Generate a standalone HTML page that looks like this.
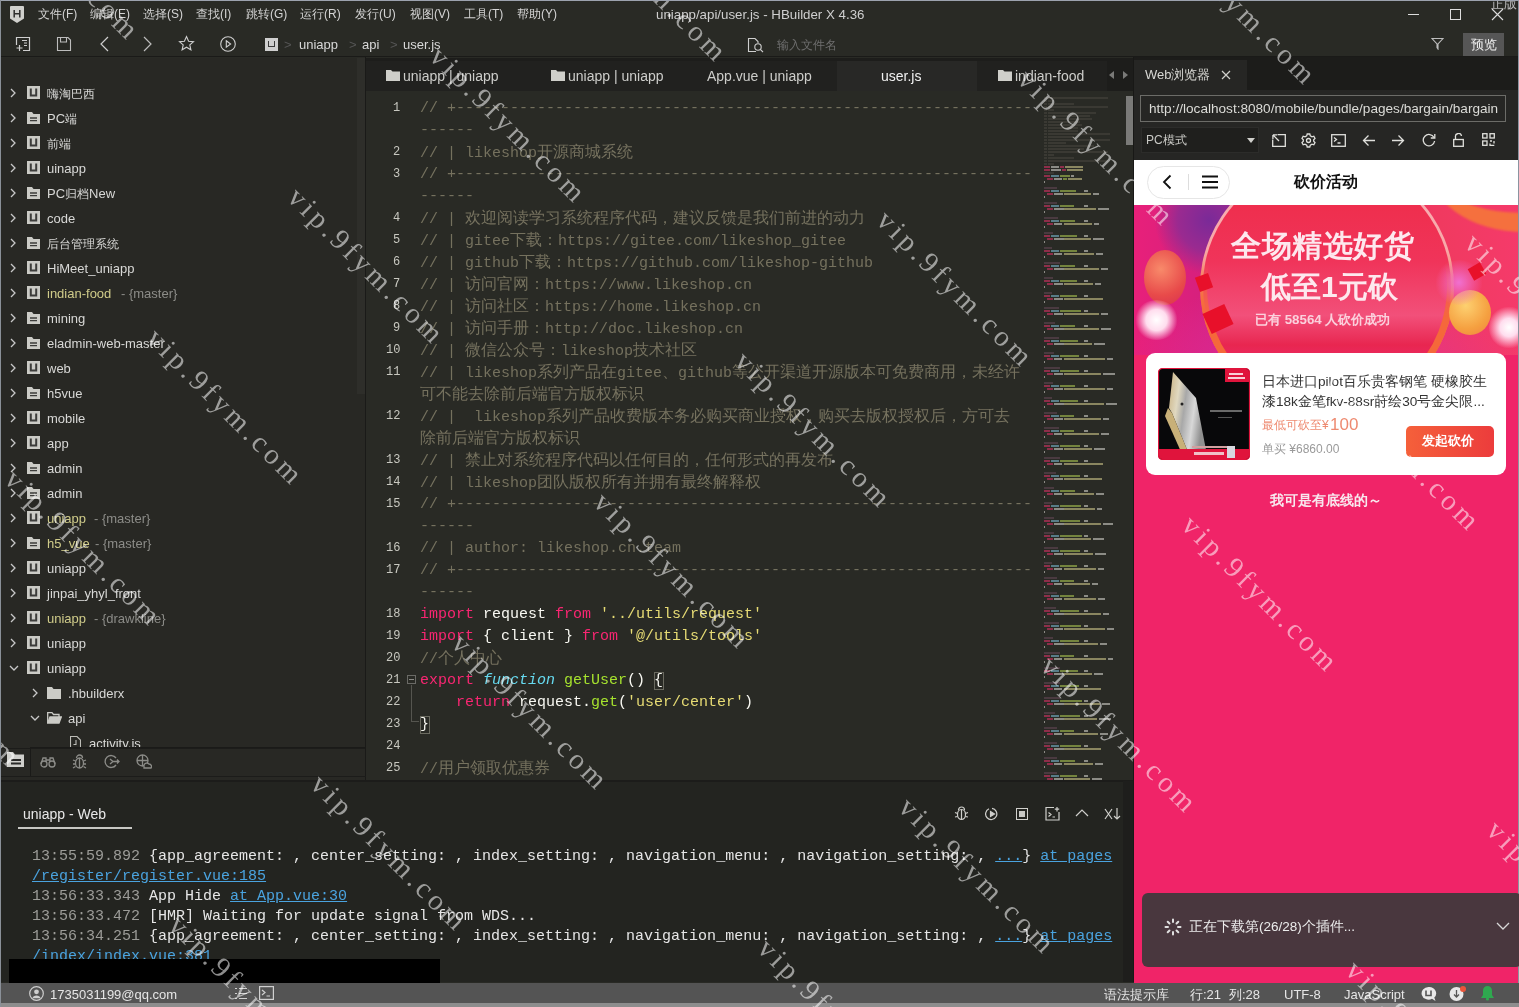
<!DOCTYPE html>
<html><head><meta charset="utf-8">
<style>
*{box-sizing:border-box;margin:0;padding:0}
html,body{width:1519px;height:1007px;overflow:hidden;background:#292a25;font-family:"Liberation Sans",sans-serif;color:#d6d6d6}
.a{position:absolute}
.t{position:absolute;white-space:pre;line-height:1}
#menu{left:0;top:0;width:1519px;height:28px;background:#292a25}
.m{position:absolute;top:8px;font-size:12px;line-height:1;white-space:pre;color:#d4d4d4}
#tool{left:0;top:28px;width:1519px;height:30px;background:#292a25}
#side{left:0;top:58px;width:366px;height:722px;background:#282824}
#tabs{left:366px;top:58px;width:769px;height:33px;background:#1d1d1b}
#editor{left:366px;top:91px;width:769px;height:689px;background:#292a25}
#console{left:0;top:780px;width:1135px;height:202px;background:#232420}
#status{left:0;top:983px;width:1519px;height:20px;background:#545454}
#browser{left:1135px;top:58px;width:384px;height:924px;background:#252524}
.st{font-size:13px}
.tb{font-size:14px;color:#cdcdca}
.ln{font-family:"Liberation Mono",monospace;font-size:12px;color:#c8c8c0}
.row{position:absolute;left:420px;white-space:pre;height:22px;line-height:22px}
.cj{font-size:16px}
.cl{position:absolute;white-space:pre;font-family:"Liberation Mono",monospace;font-size:15px;line-height:20px;height:20px;color:#e6e6e6}
.lk{color:#4aa3df;text-decoration:underline}
.sb{font-size:13px;color:#e6e6e6}
.wm{position:absolute;white-space:pre;font-family:"Liberation Serif",serif;font-size:29px;line-height:1;letter-spacing:3.9px;color:#8c8c8c;mix-blend-mode:screen;transform:rotate(45deg);transform-origin:0 0;pointer-events:none}
#mm i{position:absolute;display:block}
.code{font-family:"Liberation Mono",monospace;font-size:15px}
</style></head>
<body>
<div id="menu" class="a"></div>
<svg class="a" style="left:10px;top:6px" width="14" height="17" viewBox="0 0 14 17"><path d="M0 1Q0 0 1 0H13Q14 0 14 1V12.5L7 17L0 12.5Z" fill="#d0d0cc"/><path d="M4.2 4V11.5M9.8 4V11.5M4.2 7.7H9.8" stroke="#2e2e2c" stroke-width="1.5" fill="none"/></svg>
<span class="m" style="left:38px">文件(F)</span>
<span class="m" style="left:90px">编辑(E)</span>
<span class="m" style="left:143px">选择(S)</span>
<span class="m" style="left:196px">查找(I)</span>
<span class="m" style="left:246px">跳转(G)</span>
<span class="m" style="left:300px">运行(R)</span>
<span class="m" style="left:355px">发行(U)</span>
<span class="m" style="left:410px">视图(V)</span>
<span class="m" style="left:464px">工具(T)</span>
<span class="m" style="left:517px">帮助(Y)</span>
<span class="m" style="left:656px;top:8px;font-size:13.3px;color:#cfcfcf">uniapp/api/user.js - HBuilder X 4.36</span>
<div class="a" style="left:1408px;top:14px;width:11px;height:1px;background:#ddd"></div>
<div class="a" style="left:1450px;top:9px;width:11px;height:11px;border:1px solid #ddd"></div>
<svg class="a" style="left:1491px;top:8px" width="13" height="13" viewBox="0 0 13 13"><path d="M1 1L12 12M12 1L1 12" stroke="#ddd" stroke-width="1.1"/></svg>
<div id="tool" class="a"></div>
<svg class="a" style="left:15px;top:36px" width="16" height="16" viewBox="0 0 16 16" fill="none" stroke="#cfcfcf" stroke-width="1.2"><path d="M5 1.5H14.5V14.5H8M1.5 9V1.5H5"/><path d="M7 4.5H12M9 7H12M9 9.5H12M4.5 9V15M1.5 12H7.5"/></svg>
<svg class="a" style="left:56px;top:36px" width="16" height="16" viewBox="0 0 16 16" fill="none" stroke="#bdbdbd" stroke-width="1.1"><path d="M1.5 1.5H12L14.5 4V14.5H1.5Z"/><path d="M4.5 1.5V6H10.5V1.5"/></svg>
<svg class="a" style="left:99px;top:36px" width="12" height="16" viewBox="0 0 12 16" fill="none" stroke="#cfcfcf" stroke-width="1.2"><path d="M9 1L2 8L9 15"/></svg>
<svg class="a" style="left:141px;top:36px" width="12" height="16" viewBox="0 0 12 16" fill="none" stroke="#bdbdbd" stroke-width="1.2"><path d="M3 1L10 8L3 15"/></svg>
<svg class="a" style="left:178px;top:35px" width="17" height="17" viewBox="0 0 17 17" fill="none" stroke="#cfcfcf" stroke-width="1.1"><path d="M8.5 1.5L10.6 6.2L15.5 6.6L11.8 9.9L12.9 14.8L8.5 12.2L4.1 14.8L5.2 9.9L1.5 6.6L6.4 6.2Z"/></svg>
<svg class="a" style="left:219px;top:35px" width="18" height="18" viewBox="0 0 18 18" fill="none" stroke="#cfcfcf" stroke-width="1.1"><circle cx="9" cy="9" r="7.3"/><path d="M7.3 5.8L11.6 9L7.3 12.2Z"/></svg>
<div class="a" style="left:265px;top:38px;width:13px;height:13px;background:#cfcfcf"></div>
<div class="a" style="left:268px;top:41px;width:7px;height:6px;border:1.5px solid #3a3a3a;border-top:none"></div>
<span class="t" style="left:284px;top:38px;font-size:13px;color:#555">&gt;</span>
<span class="t" style="left:299px;top:38px;font-size:13px;color:#d8d8d8">uniapp</span>
<span class="t" style="left:349px;top:38px;font-size:13px;color:#555">&gt;</span>
<span class="t" style="left:362px;top:38px;font-size:13px;color:#d8d8d8">api</span>
<span class="t" style="left:390px;top:38px;font-size:13px;color:#555">&gt;</span>
<span class="t" style="left:403px;top:38px;font-size:13px;color:#d8d8d8">user.js</span>
<svg class="a" style="left:747px;top:37px" width="17" height="16" viewBox="0 0 17 16" fill="none" stroke="#cfcfcf" stroke-width="1.1"><path d="M9 14.5H1.5V1.5H8L11 4.5V6"/><circle cx="11" cy="10" r="3.2"/><path d="M13.3 12.3L16 15"/></svg>
<span class="t" style="left:777px;top:39px;font-size:12px;color:#6e6e6e">输入文件名</span>
<svg class="a" style="left:1431px;top:37px" width="13" height="13" viewBox="0 0 13 13" fill="none" stroke="#bdbdbd" stroke-width="1.1"><path d="M1 1.5H12L7 7V12L6 10.5V7Z"/></svg>
<div class="a" style="left:1463px;top:33px;width:41px;height:23px;background:#565656"></div>
<span class="t" style="left:1471px;top:38px;font-size:13px;color:#eee">预览</span>
<div id="side" class="a"></div>
<svg class="a" style="left:9px;top:88px" width="8" height="10" viewBox="0 0 8 10" fill="none" stroke="#c8c8c8" stroke-width="1.3"><path d="M2 1L6 5L2 9"/></svg>
<svg class="a" style="left:27px;top:86px" width="13" height="13" viewBox="0 0 13 13"><rect width="13" height="13" fill="#cbcbc6"/><path d="M3.8 2.5V9.5H9.2V2.5" fill="none" stroke="#3c3c3a" stroke-width="2"/></svg>
<span class="t st" style="left:47px;top:87px;color:#d8d8d6"><span style="font-size:12px">嗨淘巴西</span></span>
<svg class="a" style="left:9px;top:113px" width="8" height="10" viewBox="0 0 8 10" fill="none" stroke="#c8c8c8" stroke-width="1.3"><path d="M2 1L6 5L2 9"/></svg>
<svg class="a" style="left:27px;top:112px" width="13" height="12" viewBox="0 0 13 12"><path d="M0 0H5L6.5 2H13V12H0Z" fill="#cbcbc6"/><path d="M3 6H10M3 8.7H10" stroke="#3c3c3a" stroke-width="1.3"/></svg>
<span class="t st" style="left:47px;top:112px;color:#d8d8d6">PC<span style="font-size:12px">端</span></span>
<svg class="a" style="left:9px;top:138px" width="8" height="10" viewBox="0 0 8 10" fill="none" stroke="#c8c8c8" stroke-width="1.3"><path d="M2 1L6 5L2 9"/></svg>
<svg class="a" style="left:27px;top:136px" width="13" height="13" viewBox="0 0 13 13"><rect width="13" height="13" fill="#cbcbc6"/><path d="M3.8 2.5V9.5H9.2V2.5" fill="none" stroke="#3c3c3a" stroke-width="2"/></svg>
<span class="t st" style="left:47px;top:137px;color:#d8d8d6"><span style="font-size:12px">前端</span></span>
<svg class="a" style="left:9px;top:163px" width="8" height="10" viewBox="0 0 8 10" fill="none" stroke="#c8c8c8" stroke-width="1.3"><path d="M2 1L6 5L2 9"/></svg>
<svg class="a" style="left:27px;top:161px" width="13" height="13" viewBox="0 0 13 13"><rect width="13" height="13" fill="#cbcbc6"/><path d="M3.8 2.5V9.5H9.2V2.5" fill="none" stroke="#3c3c3a" stroke-width="2"/></svg>
<span class="t st" style="left:47px;top:162px;color:#d8d8d6">uinapp</span>
<svg class="a" style="left:9px;top:188px" width="8" height="10" viewBox="0 0 8 10" fill="none" stroke="#c8c8c8" stroke-width="1.3"><path d="M2 1L6 5L2 9"/></svg>
<svg class="a" style="left:27px;top:187px" width="13" height="12" viewBox="0 0 13 12"><path d="M0 0H5L6.5 2H13V12H0Z" fill="#cbcbc6"/><path d="M3 6H10M3 8.7H10" stroke="#3c3c3a" stroke-width="1.3"/></svg>
<span class="t st" style="left:47px;top:187px;color:#d8d8d6">PC<span style="font-size:12px">归档</span>New</span>
<svg class="a" style="left:9px;top:213px" width="8" height="10" viewBox="0 0 8 10" fill="none" stroke="#c8c8c8" stroke-width="1.3"><path d="M2 1L6 5L2 9"/></svg>
<svg class="a" style="left:27px;top:211px" width="13" height="13" viewBox="0 0 13 13"><rect width="13" height="13" fill="#cbcbc6"/><path d="M3.8 2.5V9.5H9.2V2.5" fill="none" stroke="#3c3c3a" stroke-width="2"/></svg>
<span class="t st" style="left:47px;top:212px;color:#d8d8d6">code</span>
<svg class="a" style="left:9px;top:238px" width="8" height="10" viewBox="0 0 8 10" fill="none" stroke="#c8c8c8" stroke-width="1.3"><path d="M2 1L6 5L2 9"/></svg>
<svg class="a" style="left:27px;top:237px" width="13" height="12" viewBox="0 0 13 12"><path d="M0 0H5L6.5 2H13V12H0Z" fill="#cbcbc6"/><path d="M3 6H10M3 8.7H10" stroke="#3c3c3a" stroke-width="1.3"/></svg>
<span class="t st" style="left:47px;top:237px;color:#d8d8d6"><span style="font-size:12px">后台管理系统</span></span>
<svg class="a" style="left:9px;top:263px" width="8" height="10" viewBox="0 0 8 10" fill="none" stroke="#c8c8c8" stroke-width="1.3"><path d="M2 1L6 5L2 9"/></svg>
<svg class="a" style="left:27px;top:261px" width="13" height="13" viewBox="0 0 13 13"><rect width="13" height="13" fill="#cbcbc6"/><path d="M3.8 2.5V9.5H9.2V2.5" fill="none" stroke="#3c3c3a" stroke-width="2"/></svg>
<span class="t st" style="left:47px;top:262px;color:#d8d8d6">HiMeet_uniapp</span>
<svg class="a" style="left:9px;top:288px" width="8" height="10" viewBox="0 0 8 10" fill="none" stroke="#c8c8c8" stroke-width="1.3"><path d="M2 1L6 5L2 9"/></svg>
<svg class="a" style="left:27px;top:286px" width="13" height="13" viewBox="0 0 13 13"><rect width="13" height="13" fill="#cbcbc6"/><path d="M3.8 2.5V9.5H9.2V2.5" fill="none" stroke="#3c3c3a" stroke-width="2"/></svg>
<span class="t st" style="left:47px;top:287px;color:#d0cc8a">indian-food</span>
<span class="t st" style="left:121px;top:287px;color:#8c8c88">- {master}</span>
<svg class="a" style="left:9px;top:313px" width="8" height="10" viewBox="0 0 8 10" fill="none" stroke="#c8c8c8" stroke-width="1.3"><path d="M2 1L6 5L2 9"/></svg>
<svg class="a" style="left:27px;top:312px" width="13" height="12" viewBox="0 0 13 12"><path d="M0 0H5L6.5 2H13V12H0Z" fill="#cbcbc6"/><path d="M3 6H10M3 8.7H10" stroke="#3c3c3a" stroke-width="1.3"/></svg>
<span class="t st" style="left:47px;top:312px;color:#d8d8d6">mining</span>
<svg class="a" style="left:9px;top:338px" width="8" height="10" viewBox="0 0 8 10" fill="none" stroke="#c8c8c8" stroke-width="1.3"><path d="M2 1L6 5L2 9"/></svg>
<svg class="a" style="left:27px;top:337px" width="13" height="12" viewBox="0 0 13 12"><path d="M0 0H5L6.5 2H13V12H0Z" fill="#cbcbc6"/><path d="M3 6H10M3 8.7H10" stroke="#3c3c3a" stroke-width="1.3"/></svg>
<span class="t st" style="left:47px;top:337px;color:#d8d8d6">eladmin-web-master</span>
<svg class="a" style="left:9px;top:363px" width="8" height="10" viewBox="0 0 8 10" fill="none" stroke="#c8c8c8" stroke-width="1.3"><path d="M2 1L6 5L2 9"/></svg>
<svg class="a" style="left:27px;top:361px" width="13" height="13" viewBox="0 0 13 13"><rect width="13" height="13" fill="#cbcbc6"/><path d="M3.8 2.5V9.5H9.2V2.5" fill="none" stroke="#3c3c3a" stroke-width="2"/></svg>
<span class="t st" style="left:47px;top:362px;color:#d8d8d6">web</span>
<svg class="a" style="left:9px;top:388px" width="8" height="10" viewBox="0 0 8 10" fill="none" stroke="#c8c8c8" stroke-width="1.3"><path d="M2 1L6 5L2 9"/></svg>
<svg class="a" style="left:27px;top:387px" width="13" height="12" viewBox="0 0 13 12"><path d="M0 0H5L6.5 2H13V12H0Z" fill="#cbcbc6"/><path d="M3 6H10M3 8.7H10" stroke="#3c3c3a" stroke-width="1.3"/></svg>
<span class="t st" style="left:47px;top:387px;color:#d8d8d6">h5vue</span>
<svg class="a" style="left:9px;top:413px" width="8" height="10" viewBox="0 0 8 10" fill="none" stroke="#c8c8c8" stroke-width="1.3"><path d="M2 1L6 5L2 9"/></svg>
<svg class="a" style="left:27px;top:411px" width="13" height="13" viewBox="0 0 13 13"><rect width="13" height="13" fill="#cbcbc6"/><path d="M3.8 2.5V9.5H9.2V2.5" fill="none" stroke="#3c3c3a" stroke-width="2"/></svg>
<span class="t st" style="left:47px;top:412px;color:#d8d8d6">mobile</span>
<svg class="a" style="left:9px;top:438px" width="8" height="10" viewBox="0 0 8 10" fill="none" stroke="#c8c8c8" stroke-width="1.3"><path d="M2 1L6 5L2 9"/></svg>
<svg class="a" style="left:27px;top:436px" width="13" height="13" viewBox="0 0 13 13"><rect width="13" height="13" fill="#cbcbc6"/><path d="M3.8 2.5V9.5H9.2V2.5" fill="none" stroke="#3c3c3a" stroke-width="2"/></svg>
<span class="t st" style="left:47px;top:437px;color:#d8d8d6">app</span>
<svg class="a" style="left:9px;top:463px" width="8" height="10" viewBox="0 0 8 10" fill="none" stroke="#c8c8c8" stroke-width="1.3"><path d="M2 1L6 5L2 9"/></svg>
<svg class="a" style="left:27px;top:462px" width="13" height="12" viewBox="0 0 13 12"><path d="M0 0H5L6.5 2H13V12H0Z" fill="#cbcbc6"/><path d="M3 6H10M3 8.7H10" stroke="#3c3c3a" stroke-width="1.3"/></svg>
<span class="t st" style="left:47px;top:462px;color:#d8d8d6">admin</span>
<svg class="a" style="left:9px;top:488px" width="8" height="10" viewBox="0 0 8 10" fill="none" stroke="#c8c8c8" stroke-width="1.3"><path d="M2 1L6 5L2 9"/></svg>
<svg class="a" style="left:27px;top:487px" width="13" height="12" viewBox="0 0 13 12"><path d="M0 0H5L6.5 2H13V12H0Z" fill="#cbcbc6"/><path d="M3 6H10M3 8.7H10" stroke="#3c3c3a" stroke-width="1.3"/></svg>
<span class="t st" style="left:47px;top:487px;color:#d8d8d6">admin</span>
<svg class="a" style="left:9px;top:513px" width="8" height="10" viewBox="0 0 8 10" fill="none" stroke="#c8c8c8" stroke-width="1.3"><path d="M2 1L6 5L2 9"/></svg>
<svg class="a" style="left:27px;top:511px" width="13" height="13" viewBox="0 0 13 13"><rect width="13" height="13" fill="#cbcbc6"/><path d="M3.8 2.5V9.5H9.2V2.5" fill="none" stroke="#3c3c3a" stroke-width="2"/></svg>
<span class="t st" style="left:47px;top:512px;color:#d0cc8a">uniapp</span>
<span class="t st" style="left:94px;top:512px;color:#8c8c88">- {master}</span>
<svg class="a" style="left:9px;top:538px" width="8" height="10" viewBox="0 0 8 10" fill="none" stroke="#c8c8c8" stroke-width="1.3"><path d="M2 1L6 5L2 9"/></svg>
<svg class="a" style="left:27px;top:537px" width="13" height="12" viewBox="0 0 13 12"><path d="M0 0H5L6.5 2H13V12H0Z" fill="#cbcbc6"/><path d="M3 6H10M3 8.7H10" stroke="#3c3c3a" stroke-width="1.3"/></svg>
<span class="t st" style="left:47px;top:537px;color:#d0cc8a">h5_vue</span>
<span class="t st" style="left:95px;top:537px;color:#8c8c88">- {master}</span>
<svg class="a" style="left:9px;top:563px" width="8" height="10" viewBox="0 0 8 10" fill="none" stroke="#c8c8c8" stroke-width="1.3"><path d="M2 1L6 5L2 9"/></svg>
<svg class="a" style="left:27px;top:561px" width="13" height="13" viewBox="0 0 13 13"><rect width="13" height="13" fill="#cbcbc6"/><path d="M3.8 2.5V9.5H9.2V2.5" fill="none" stroke="#3c3c3a" stroke-width="2"/></svg>
<span class="t st" style="left:47px;top:562px;color:#d8d8d6">uniapp</span>
<svg class="a" style="left:9px;top:588px" width="8" height="10" viewBox="0 0 8 10" fill="none" stroke="#c8c8c8" stroke-width="1.3"><path d="M2 1L6 5L2 9"/></svg>
<svg class="a" style="left:27px;top:586px" width="13" height="13" viewBox="0 0 13 13"><rect width="13" height="13" fill="#cbcbc6"/><path d="M3.8 2.5V9.5H9.2V2.5" fill="none" stroke="#3c3c3a" stroke-width="2"/></svg>
<span class="t st" style="left:47px;top:587px;color:#d8d8d6">jinpai_yhyl_front</span>
<svg class="a" style="left:9px;top:613px" width="8" height="10" viewBox="0 0 8 10" fill="none" stroke="#c8c8c8" stroke-width="1.3"><path d="M2 1L6 5L2 9"/></svg>
<svg class="a" style="left:27px;top:611px" width="13" height="13" viewBox="0 0 13 13"><rect width="13" height="13" fill="#cbcbc6"/><path d="M3.8 2.5V9.5H9.2V2.5" fill="none" stroke="#3c3c3a" stroke-width="2"/></svg>
<span class="t st" style="left:47px;top:612px;color:#d0cc8a">uniapp</span>
<span class="t st" style="left:94px;top:612px;color:#8c8c88">- {drawkline}</span>
<svg class="a" style="left:9px;top:638px" width="8" height="10" viewBox="0 0 8 10" fill="none" stroke="#c8c8c8" stroke-width="1.3"><path d="M2 1L6 5L2 9"/></svg>
<svg class="a" style="left:27px;top:636px" width="13" height="13" viewBox="0 0 13 13"><rect width="13" height="13" fill="#cbcbc6"/><path d="M3.8 2.5V9.5H9.2V2.5" fill="none" stroke="#3c3c3a" stroke-width="2"/></svg>
<span class="t st" style="left:47px;top:637px;color:#d8d8d6">uniapp</span>
<svg class="a" style="left:9px;top:664px" width="10" height="8" viewBox="0 0 10 8" fill="none" stroke="#c8c8c8" stroke-width="1.3"><path d="M1 2L5 6L9 2"/></svg>
<svg class="a" style="left:27px;top:661px" width="13" height="13" viewBox="0 0 13 13"><rect width="13" height="13" fill="#cbcbc6"/><path d="M3.8 2.5V9.5H9.2V2.5" fill="none" stroke="#3c3c3a" stroke-width="2"/></svg>
<span class="t st" style="left:47px;top:662px;color:#d8d8d6">uniapp</span>
<svg class="a" style="left:31px;top:688px" width="8" height="10" viewBox="0 0 8 10" fill="none" stroke="#c8c8c8" stroke-width="1.3"><path d="M2 1L6 5L2 9"/></svg>
<svg class="a" style="left:47px;top:687px" width="14" height="12" viewBox="0 0 14 12"><path d="M0 0H5L6.5 2H14V12H0Z" fill="#cbcbc6"/></svg>
<span class="t st" style="left:68px;top:687px;color:#d8d8d6">.hbuilderx</span>
<svg class="a" style="left:30px;top:714px" width="10" height="8" viewBox="0 0 10 8" fill="none" stroke="#c8c8c8" stroke-width="1.3"><path d="M1 2L5 6L9 2"/></svg>
<svg class="a" style="left:47px;top:712px" width="15" height="12" viewBox="0 0 15 12" fill="none" stroke="#cbcbc6" stroke-width="1.3"><path d="M0.7 11V0.7H5L6.5 2.5H12V5"/><path d="M0.7 11L3 5H14.3L12 11Z" fill="#cbcbc6"/></svg>
<span class="t st" style="left:68px;top:712px;color:#d8d8d6">api</span>
<svg class="a" style="left:70px;top:736px" width="11" height="13" viewBox="0 0 11 13" fill="none" stroke="#bdbdb8" stroke-width="1.1"><path d="M0.5 0.5H7L10.5 4V12.5H0.5Z"/><path d="M6 4V8.5H3.5"/></svg>
<span class="t st" style="left:89px;top:737px;color:#d8d8d6">activity.js</span>
<div class="a" style="left:357px;top:58px;width:8px;height:336px;background:#2e2e2a"></div>
<div class="a" style="left:0;top:56px;width:1519px;height:1px;background:#1a1a18"></div>
<div class="a" style="left:0;top:748px;width:366px;height:32px;background:#282824;border-top:1px solid #1c1c1a"></div>
<div id="tabs" class="a"></div>
<div class="a" style="left:365px;top:57px;width:1px;height:724px;background:#1a1a18"></div>
<div class="a" style="left:366px;top:61px;width:471px;height:30px;background:#21211f"></div>
<div class="a" style="left:837px;top:61px;width:140px;height:30px;background:#282826"></div>
<div class="a" style="left:977px;top:61px;width:130px;height:30px;background:#21211f"></div>
<svg class="a" style="left:386px;top:70px" width="14" height="11" viewBox="0 0 14 11"><path d="M0 0H5L6.5 1.5H14V11H0Z" fill="#cfcfca"/></svg>
<span class="t tb" style="left:403px;top:69px">uniapp | uniapp</span>
<svg class="a" style="left:551px;top:70px" width="14" height="11" viewBox="0 0 14 11"><path d="M0 0H5L6.5 1.5H14V11H0Z" fill="#cfcfca"/></svg>
<span class="t tb" style="left:568px;top:69px">uniapp | uniapp</span>
<span class="t tb" style="left:707px;top:69px">App.vue | uniapp</span>
<span class="t tb" style="left:881px;top:69px;color:#f0f0f0">user.js</span>
<svg class="a" style="left:998px;top:70px" width="14" height="11" viewBox="0 0 14 11"><path d="M0 0H5L6.5 1.5H14V11H0Z" fill="#cfcfca"/></svg>
<span class="t tb" style="left:1015px;top:69px">indian-food</span>
<svg class="a" style="left:1108px;top:71px" width="22" height="8" viewBox="0 0 22 8"><path d="M6 0V8L1 4Z M15 0V8L20 4Z" fill="#7a7a78"/></svg>
<div id="editor" class="a"></div>
<span class="t ln" style="left:393px;top:102px">1</span>
<div class="row code" style="top:98px"><span style="color:#75715e">// +----------------------------------------------------------------</span></div>
<div class="row code" style="top:120px"><span style="color:#75715e">------</span></div>
<span class="t ln" style="left:393px;top:146px">2</span>
<div class="row code" style="top:142px"><span style="color:#75715e">// | likeshop<span class="cj">开源商城系统</span></span></div>
<span class="t ln" style="left:393px;top:168px">3</span>
<div class="row code" style="top:164px"><span style="color:#75715e">// +----------------------------------------------------------------</span></div>
<div class="row code" style="top:186px"><span style="color:#75715e">------</span></div>
<span class="t ln" style="left:393px;top:212px">4</span>
<div class="row code" style="top:208px"><span style="color:#75715e">// | <span class="cj">欢迎阅读学习系统程序代码，建议反馈是我们前进的动力</span></span></div>
<span class="t ln" style="left:393px;top:234px">5</span>
<div class="row code" style="top:230px"><span style="color:#75715e">// | gitee<span class="cj">下载：</span>https://gitee.com/likeshop_gitee</span></div>
<span class="t ln" style="left:393px;top:256px">6</span>
<div class="row code" style="top:252px"><span style="color:#75715e">// | github<span class="cj">下载：</span>https://github.com/likeshop-github</span></div>
<span class="t ln" style="left:393px;top:278px">7</span>
<div class="row code" style="top:274px"><span style="color:#75715e">// | <span class="cj">访问官网：</span>https://www.likeshop.cn</span></div>
<span class="t ln" style="left:393px;top:300px">8</span>
<div class="row code" style="top:296px"><span style="color:#75715e">// | <span class="cj">访问社区：</span>https://home.likeshop.cn</span></div>
<span class="t ln" style="left:393px;top:322px">9</span>
<div class="row code" style="top:318px"><span style="color:#75715e">// | <span class="cj">访问手册：</span>http://doc.likeshop.cn</span></div>
<span class="t ln" style="left:386px;top:344px">10</span>
<div class="row code" style="top:340px"><span style="color:#75715e">// | <span class="cj">微信公众号：</span>likeshop<span class="cj">技术社区</span></span></div>
<span class="t ln" style="left:386px;top:366px">11</span>
<div class="row code" style="top:362px"><span style="color:#75715e">// | likeshop<span class="cj">系列产品在</span>gitee<span class="cj">、</span>github<span class="cj">等公开渠道开源版本可免费商用，未经许</span></span></div>
<div class="row code" style="top:384px"><span style="color:#75715e"><span class="cj">可不能去除前后端官方版权标识</span></span></div>
<span class="t ln" style="left:386px;top:410px">12</span>
<div class="row code" style="top:406px"><span style="color:#75715e">// |  likeshop<span class="cj">系列产品收费版本务必购买商业授权，购买去版权授权后，方可去</span></span></div>
<div class="row code" style="top:428px"><span style="color:#75715e"><span class="cj">除前后端官方版权标识</span></span></div>
<span class="t ln" style="left:386px;top:454px">13</span>
<div class="row code" style="top:450px"><span style="color:#75715e">// | <span class="cj">禁止对系统程序代码以任何目的，任何形式的再发布</span></span></div>
<span class="t ln" style="left:386px;top:476px">14</span>
<div class="row code" style="top:472px"><span style="color:#75715e">// | likeshop<span class="cj">团队版权所有并拥有最终解释权</span></span></div>
<span class="t ln" style="left:386px;top:498px">15</span>
<div class="row code" style="top:494px"><span style="color:#75715e">// +----------------------------------------------------------------</span></div>
<div class="row code" style="top:516px"><span style="color:#75715e">------</span></div>
<span class="t ln" style="left:386px;top:542px">16</span>
<div class="row code" style="top:538px"><span style="color:#75715e">// | author: likeshop.cn.team</span></div>
<span class="t ln" style="left:386px;top:564px">17</span>
<div class="row code" style="top:560px"><span style="color:#75715e">// +----------------------------------------------------------------</span></div>
<div class="row code" style="top:582px"><span style="color:#75715e">------</span></div>
<span class="t ln" style="left:386px;top:608px">18</span>
<div class="row code" style="top:604px"><span style="color:#f92672">import</span><span style="color:#f8f8f2"> request </span><span style="color:#f92672">from</span><span style="color:#f8f8f2"> </span><span style="color:#e6db74">'../utils/request'</span></div>
<span class="t ln" style="left:386px;top:630px">19</span>
<div class="row code" style="top:626px"><span style="color:#f92672">import</span><span style="color:#f8f8f2"> { client } </span><span style="color:#f92672">from</span><span style="color:#f8f8f2"> </span><span style="color:#e6db74">'@/utils/tools'</span></div>
<span class="t ln" style="left:386px;top:652px">20</span>
<div class="row code" style="top:648px"><span style="color:#75715e">//<span class="cj">个人中心</span></span></div>
<span class="t ln" style="left:386px;top:674px">21</span>
<div class="row code" style="top:670px"><span style="color:#f92672">export</span><span style="color:#f8f8f2"> </span><span style="color:#66d9ef;font-style:italic">function</span><span style="color:#f8f8f2"> </span><span style="color:#a6e22e">getUser</span><span style="color:#f8f8f2">() </span><span style="color:#f8f8f2">{</span></div>
<span class="t ln" style="left:386px;top:696px">22</span>
<div class="row code" style="top:692px"><span style="color:#75715e">    </span><span style="color:#f92672">return</span><span style="color:#f8f8f2"> request.</span><span style="color:#a6e22e">get</span><span style="color:#f8f8f2">(</span><span style="color:#e6db74">'user/center'</span><span style="color:#f8f8f2">)</span></div>
<span class="t ln" style="left:386px;top:718px">23</span>
<div class="row code" style="top:714px"><span style="color:#f8f8f2">}</span></div>
<span class="t ln" style="left:386px;top:740px">24</span>
<span class="t ln" style="left:386px;top:762px">25</span>
<div class="row code" style="top:758px"><span style="color:#75715e">//<span class="cj">用户领取优惠券</span></span></div>
<div class="a" style="left:407px;top:675px;width:9px;height:9px;border:1px solid #6a6a66"></div><div class="a" style="left:409px;top:679px;width:5px;height:1px;background:#8a8a86"></div>
<div class="a" style="left:411px;top:685px;width:1px;height:36px;background:#55554f"></div><div class="a" style="left:411px;top:721px;width:8px;height:1px;background:#55554f"></div>
<div class="a" style="left:654px;top:672px;width:10px;height:18px;border:1px solid #6a6a60"></div>
<div class="a" style="left:420px;top:716px;width:10px;height:18px;border:1px solid #6a6a60"></div>
<div id="mm" class="a" style="left:1043px;top:92px;width:82px;height:688px;overflow:hidden">
<i style="left:1px;top:5px;width:3px;height:2px;background:#3a3933"></i>
<i style="left:5px;top:5px;width:60px;height:2px;background:#3a3933"></i>
<i style="left:1px;top:8px;width:3px;height:2px;background:#3a3933"></i>
<i style="left:5px;top:8px;width:6px;height:2px;background:#3a3933"></i>
<i style="left:1px;top:11px;width:3px;height:2px;background:#3a3933"></i>
<i style="left:5px;top:11px;width:26px;height:2px;background:#3a3933"></i>
<i style="left:1px;top:14px;width:3px;height:2px;background:#3a3933"></i>
<i style="left:5px;top:14px;width:60px;height:2px;background:#3a3933"></i>
<i style="left:1px;top:17px;width:3px;height:2px;background:#3a3933"></i>
<i style="left:5px;top:17px;width:6px;height:2px;background:#3a3933"></i>
<i style="left:1px;top:20px;width:3px;height:2px;background:#3a3933"></i>
<i style="left:5px;top:20px;width:48px;height:2px;background:#3a3933"></i>
<i style="left:1px;top:23px;width:3px;height:2px;background:#3a3933"></i>
<i style="left:5px;top:23px;width:42px;height:2px;background:#3a3933"></i>
<i style="left:1px;top:26px;width:3px;height:2px;background:#3a3933"></i>
<i style="left:5px;top:26px;width:44px;height:2px;background:#3a3933"></i>
<i style="left:1px;top:29px;width:3px;height:2px;background:#3a3933"></i>
<i style="left:5px;top:29px;width:32px;height:2px;background:#3a3933"></i>
<i style="left:1px;top:32px;width:3px;height:2px;background:#3a3933"></i>
<i style="left:5px;top:32px;width:34px;height:2px;background:#3a3933"></i>
<i style="left:1px;top:35px;width:3px;height:2px;background:#3a3933"></i>
<i style="left:5px;top:35px;width:30px;height:2px;background:#3a3933"></i>
<i style="left:1px;top:38px;width:3px;height:2px;background:#3a3933"></i>
<i style="left:5px;top:38px;width:30px;height:2px;background:#3a3933"></i>
<i style="left:1px;top:41px;width:3px;height:2px;background:#3a3933"></i>
<i style="left:5px;top:41px;width:62px;height:2px;background:#3a3933"></i>
<i style="left:1px;top:44px;width:3px;height:2px;background:#3a3933"></i>
<i style="left:5px;top:44px;width:26px;height:2px;background:#3a3933"></i>
<i style="left:1px;top:47px;width:3px;height:2px;background:#3a3933"></i>
<i style="left:5px;top:47px;width:62px;height:2px;background:#3a3933"></i>
<i style="left:1px;top:50px;width:3px;height:2px;background:#3a3933"></i>
<i style="left:5px;top:50px;width:18px;height:2px;background:#3a3933"></i>
<i style="left:1px;top:53px;width:3px;height:2px;background:#3a3933"></i>
<i style="left:5px;top:53px;width:46px;height:2px;background:#3a3933"></i>
<i style="left:1px;top:56px;width:3px;height:2px;background:#3a3933"></i>
<i style="left:5px;top:56px;width:36px;height:2px;background:#3a3933"></i>
<i style="left:1px;top:59px;width:3px;height:2px;background:#3a3933"></i>
<i style="left:5px;top:59px;width:60px;height:2px;background:#3a3933"></i>
<i style="left:1px;top:62px;width:3px;height:2px;background:#3a3933"></i>
<i style="left:5px;top:62px;width:6px;height:2px;background:#3a3933"></i>
<i style="left:1px;top:65px;width:3px;height:2px;background:#3a3933"></i>
<i style="left:5px;top:65px;width:26px;height:2px;background:#3a3933"></i>
<i style="left:1px;top:68px;width:3px;height:2px;background:#3a3933"></i>
<i style="left:5px;top:68px;width:60px;height:2px;background:#3a3933"></i>
<i style="left:1px;top:71px;width:3px;height:2px;background:#3a3933"></i>
<i style="left:5px;top:71px;width:6px;height:2px;background:#3a3933"></i>
<i style="left:1px;top:74px;width:6px;height:2px;background:#8e2e4a"></i>
<i style="left:8px;top:74px;width:8px;height:2px;background:#8c8c86"></i>
<i style="left:17px;top:74px;width:4px;height:2px;background:#8e2e4a"></i>
<i style="left:22px;top:74px;width:18px;height:2px;background:#8a8660"></i>
<i style="left:1px;top:77px;width:6px;height:2px;background:#8e2e4a"></i>
<i style="left:8px;top:77px;width:10px;height:2px;background:#8c8c86"></i>
<i style="left:19px;top:77px;width:4px;height:2px;background:#8e2e4a"></i>
<i style="left:24px;top:77px;width:16px;height:2px;background:#8a8660"></i>
<i style="left:1px;top:80px;width:10px;height:2px;background:#3a3933"></i>
<i style="left:1px;top:83px;width:6px;height:2px;background:#8e2e4a"></i>
<i style="left:8px;top:83px;width:8px;height:2px;background:#587c88"></i>
<i style="left:17px;top:83px;width:10px;height:2px;background:#74843e"></i>
<i style="left:28px;top:83px;width:3px;height:2px;background:#8c8c86"></i>
<i style="left:4px;top:86px;width:6px;height:2px;background:#8e2e4a"></i>
<i style="left:11px;top:86px;width:8px;height:2px;background:#8c8c86"></i>
<i style="left:20px;top:86px;width:4px;height:2px;background:#74843e"></i>
<i style="left:25px;top:86px;width:14px;height:2px;background:#8a8660"></i>
<i style="left:1px;top:89px;width:1px;height:2px;background:#8c8c86"></i>
<i style="left:1px;top:95px;width:13px;height:2px;background:#4a3a40"></i>
<i style="left:1px;top:98px;width:6px;height:2px;background:#8e2e4a"></i>
<i style="left:8px;top:98px;width:8px;height:2px;background:#587c88"></i>
<i style="left:17px;top:98px;width:16px;height:2px;background:#74843e"></i>
<i style="left:41px;top:98px;width:4px;height:2px;background:#8c8c86"></i>
<i style="left:4px;top:101px;width:6px;height:2px;background:#8e2e4a"></i>
<i style="left:11px;top:101px;width:9px;height:2px;background:#8c8c86"></i>
<i style="left:21px;top:101px;width:27px;height:2px;background:#8a8660"></i>
<i style="left:50px;top:101px;width:6px;height:2px;background:#8c8c86"></i>
<i style="left:1px;top:104px;width:1px;height:2px;background:#8c8c86"></i>
<i style="left:1px;top:110px;width:13px;height:2px;background:#4a3a40"></i>
<i style="left:1px;top:113px;width:6px;height:2px;background:#8e2e4a"></i>
<i style="left:8px;top:113px;width:8px;height:2px;background:#587c88"></i>
<i style="left:17px;top:113px;width:14px;height:2px;background:#74843e"></i>
<i style="left:41px;top:113px;width:4px;height:2px;background:#8c8c86"></i>
<i style="left:4px;top:116px;width:6px;height:2px;background:#8e2e4a"></i>
<i style="left:11px;top:116px;width:10px;height:2px;background:#8c8c86"></i>
<i style="left:21px;top:116px;width:32px;height:2px;background:#8a8660"></i>
<i style="left:55px;top:116px;width:11px;height:2px;background:#8c8c86"></i>
<i style="left:1px;top:119px;width:1px;height:2px;background:#8c8c86"></i>
<i style="left:1px;top:125px;width:14px;height:2px;background:#4a3a40"></i>
<i style="left:1px;top:128px;width:6px;height:2px;background:#8e2e4a"></i>
<i style="left:8px;top:128px;width:8px;height:2px;background:#587c88"></i>
<i style="left:17px;top:128px;width:15px;height:2px;background:#74843e"></i>
<i style="left:41px;top:128px;width:4px;height:2px;background:#8c8c86"></i>
<i style="left:4px;top:131px;width:6px;height:2px;background:#8e2e4a"></i>
<i style="left:11px;top:131px;width:8px;height:2px;background:#8c8c86"></i>
<i style="left:21px;top:131px;width:28px;height:2px;background:#8a8660"></i>
<i style="left:51px;top:131px;width:5px;height:2px;background:#8c8c86"></i>
<i style="left:1px;top:134px;width:1px;height:2px;background:#8c8c86"></i>
<i style="left:1px;top:140px;width:9px;height:2px;background:#4a3a40"></i>
<i style="left:1px;top:143px;width:6px;height:2px;background:#8e2e4a"></i>
<i style="left:8px;top:143px;width:8px;height:2px;background:#587c88"></i>
<i style="left:17px;top:143px;width:17px;height:2px;background:#74843e"></i>
<i style="left:41px;top:143px;width:4px;height:2px;background:#8c8c86"></i>
<i style="left:4px;top:146px;width:6px;height:2px;background:#8e2e4a"></i>
<i style="left:11px;top:146px;width:10px;height:2px;background:#8c8c86"></i>
<i style="left:21px;top:146px;width:27px;height:2px;background:#8a8660"></i>
<i style="left:50px;top:146px;width:11px;height:2px;background:#8c8c86"></i>
<i style="left:1px;top:149px;width:1px;height:2px;background:#8c8c86"></i>
<i style="left:1px;top:155px;width:8px;height:2px;background:#4a3a40"></i>
<i style="left:1px;top:158px;width:6px;height:2px;background:#8e2e4a"></i>
<i style="left:8px;top:158px;width:8px;height:2px;background:#587c88"></i>
<i style="left:17px;top:158px;width:17px;height:2px;background:#74843e"></i>
<i style="left:41px;top:158px;width:4px;height:2px;background:#8c8c86"></i>
<i style="left:4px;top:161px;width:6px;height:2px;background:#8e2e4a"></i>
<i style="left:11px;top:161px;width:8px;height:2px;background:#8c8c86"></i>
<i style="left:21px;top:161px;width:30px;height:2px;background:#8a8660"></i>
<i style="left:53px;top:161px;width:7px;height:2px;background:#8c8c86"></i>
<i style="left:1px;top:164px;width:1px;height:2px;background:#8c8c86"></i>
<i style="left:1px;top:170px;width:16px;height:2px;background:#4a3a40"></i>
<i style="left:1px;top:173px;width:6px;height:2px;background:#8e2e4a"></i>
<i style="left:8px;top:173px;width:8px;height:2px;background:#587c88"></i>
<i style="left:17px;top:173px;width:15px;height:2px;background:#74843e"></i>
<i style="left:41px;top:173px;width:4px;height:2px;background:#8c8c86"></i>
<i style="left:4px;top:176px;width:6px;height:2px;background:#8e2e4a"></i>
<i style="left:11px;top:176px;width:10px;height:2px;background:#8c8c86"></i>
<i style="left:21px;top:176px;width:35px;height:2px;background:#8a8660"></i>
<i style="left:58px;top:176px;width:7px;height:2px;background:#8c8c86"></i>
<i style="left:1px;top:179px;width:1px;height:2px;background:#8c8c86"></i>
<i style="left:1px;top:185px;width:9px;height:2px;background:#4a3a40"></i>
<i style="left:1px;top:188px;width:6px;height:2px;background:#8e2e4a"></i>
<i style="left:8px;top:188px;width:8px;height:2px;background:#587c88"></i>
<i style="left:17px;top:188px;width:17px;height:2px;background:#74843e"></i>
<i style="left:41px;top:188px;width:4px;height:2px;background:#8c8c86"></i>
<i style="left:4px;top:191px;width:6px;height:2px;background:#8e2e4a"></i>
<i style="left:11px;top:191px;width:9px;height:2px;background:#8c8c86"></i>
<i style="left:21px;top:191px;width:29px;height:2px;background:#8a8660"></i>
<i style="left:52px;top:191px;width:6px;height:2px;background:#8c8c86"></i>
<i style="left:1px;top:194px;width:1px;height:2px;background:#8c8c86"></i>
<i style="left:1px;top:200px;width:8px;height:2px;background:#4a3a40"></i>
<i style="left:1px;top:203px;width:6px;height:2px;background:#8e2e4a"></i>
<i style="left:8px;top:203px;width:8px;height:2px;background:#587c88"></i>
<i style="left:17px;top:203px;width:17px;height:2px;background:#74843e"></i>
<i style="left:41px;top:203px;width:4px;height:2px;background:#8c8c86"></i>
<i style="left:4px;top:206px;width:6px;height:2px;background:#8e2e4a"></i>
<i style="left:11px;top:206px;width:9px;height:2px;background:#8c8c86"></i>
<i style="left:21px;top:206px;width:39px;height:2px;background:#8a8660"></i>
<i style="left:1px;top:209px;width:1px;height:2px;background:#8c8c86"></i>
<i style="left:1px;top:215px;width:15px;height:2px;background:#4a3a40"></i>
<i style="left:1px;top:218px;width:6px;height:2px;background:#8e2e4a"></i>
<i style="left:8px;top:218px;width:8px;height:2px;background:#587c88"></i>
<i style="left:17px;top:218px;width:21px;height:2px;background:#74843e"></i>
<i style="left:41px;top:218px;width:4px;height:2px;background:#8c8c86"></i>
<i style="left:4px;top:221px;width:6px;height:2px;background:#8e2e4a"></i>
<i style="left:11px;top:221px;width:9px;height:2px;background:#8c8c86"></i>
<i style="left:21px;top:221px;width:35px;height:2px;background:#8a8660"></i>
<i style="left:58px;top:221px;width:7px;height:2px;background:#8c8c86"></i>
<i style="left:1px;top:224px;width:1px;height:2px;background:#8c8c86"></i>
<i style="left:1px;top:230px;width:11px;height:2px;background:#4a3a40"></i>
<i style="left:1px;top:233px;width:6px;height:2px;background:#8e2e4a"></i>
<i style="left:8px;top:233px;width:8px;height:2px;background:#587c88"></i>
<i style="left:17px;top:233px;width:15px;height:2px;background:#74843e"></i>
<i style="left:41px;top:233px;width:4px;height:2px;background:#8c8c86"></i>
<i style="left:4px;top:236px;width:6px;height:2px;background:#8e2e4a"></i>
<i style="left:11px;top:236px;width:10px;height:2px;background:#8c8c86"></i>
<i style="left:21px;top:236px;width:35px;height:2px;background:#8a8660"></i>
<i style="left:58px;top:236px;width:10px;height:2px;background:#8c8c86"></i>
<i style="left:1px;top:239px;width:1px;height:2px;background:#8c8c86"></i>
<i style="left:1px;top:245px;width:15px;height:2px;background:#4a3a40"></i>
<i style="left:1px;top:248px;width:6px;height:2px;background:#8e2e4a"></i>
<i style="left:8px;top:248px;width:8px;height:2px;background:#587c88"></i>
<i style="left:17px;top:248px;width:18px;height:2px;background:#74843e"></i>
<i style="left:41px;top:248px;width:4px;height:2px;background:#8c8c86"></i>
<i style="left:4px;top:251px;width:6px;height:2px;background:#8e2e4a"></i>
<i style="left:11px;top:251px;width:10px;height:2px;background:#8c8c86"></i>
<i style="left:21px;top:251px;width:28px;height:2px;background:#8a8660"></i>
<i style="left:51px;top:251px;width:11px;height:2px;background:#8c8c86"></i>
<i style="left:1px;top:254px;width:1px;height:2px;background:#8c8c86"></i>
<i style="left:1px;top:260px;width:10px;height:2px;background:#4a3a40"></i>
<i style="left:1px;top:263px;width:6px;height:2px;background:#8e2e4a"></i>
<i style="left:8px;top:263px;width:8px;height:2px;background:#587c88"></i>
<i style="left:17px;top:263px;width:19px;height:2px;background:#74843e"></i>
<i style="left:41px;top:263px;width:4px;height:2px;background:#8c8c86"></i>
<i style="left:4px;top:266px;width:6px;height:2px;background:#8e2e4a"></i>
<i style="left:11px;top:266px;width:8px;height:2px;background:#8c8c86"></i>
<i style="left:21px;top:266px;width:41px;height:2px;background:#8a8660"></i>
<i style="left:64px;top:266px;width:6px;height:2px;background:#8c8c86"></i>
<i style="left:1px;top:269px;width:1px;height:2px;background:#8c8c86"></i>
<i style="left:1px;top:275px;width:16px;height:2px;background:#4a3a40"></i>
<i style="left:1px;top:278px;width:6px;height:2px;background:#8e2e4a"></i>
<i style="left:8px;top:278px;width:8px;height:2px;background:#587c88"></i>
<i style="left:17px;top:278px;width:19px;height:2px;background:#74843e"></i>
<i style="left:41px;top:278px;width:4px;height:2px;background:#8c8c86"></i>
<i style="left:4px;top:281px;width:6px;height:2px;background:#8e2e4a"></i>
<i style="left:11px;top:281px;width:9px;height:2px;background:#8c8c86"></i>
<i style="left:21px;top:281px;width:37px;height:2px;background:#8a8660"></i>
<i style="left:60px;top:281px;width:12px;height:2px;background:#8c8c86"></i>
<i style="left:1px;top:284px;width:1px;height:2px;background:#8c8c86"></i>
<i style="left:1px;top:290px;width:9px;height:2px;background:#4a3a40"></i>
<i style="left:1px;top:293px;width:6px;height:2px;background:#8e2e4a"></i>
<i style="left:8px;top:293px;width:8px;height:2px;background:#587c88"></i>
<i style="left:17px;top:293px;width:15px;height:2px;background:#74843e"></i>
<i style="left:41px;top:293px;width:4px;height:2px;background:#8c8c86"></i>
<i style="left:4px;top:296px;width:6px;height:2px;background:#8e2e4a"></i>
<i style="left:11px;top:296px;width:9px;height:2px;background:#8c8c86"></i>
<i style="left:21px;top:296px;width:41px;height:2px;background:#8a8660"></i>
<i style="left:64px;top:296px;width:6px;height:2px;background:#8c8c86"></i>
<i style="left:1px;top:299px;width:1px;height:2px;background:#8c8c86"></i>
<i style="left:1px;top:305px;width:8px;height:2px;background:#4a3a40"></i>
<i style="left:1px;top:308px;width:6px;height:2px;background:#8e2e4a"></i>
<i style="left:8px;top:308px;width:8px;height:2px;background:#587c88"></i>
<i style="left:17px;top:308px;width:18px;height:2px;background:#74843e"></i>
<i style="left:41px;top:308px;width:4px;height:2px;background:#8c8c86"></i>
<i style="left:4px;top:311px;width:6px;height:2px;background:#8e2e4a"></i>
<i style="left:11px;top:311px;width:10px;height:2px;background:#8c8c86"></i>
<i style="left:21px;top:311px;width:40px;height:2px;background:#8a8660"></i>
<i style="left:63px;top:311px;width:11px;height:2px;background:#8c8c86"></i>
<i style="left:1px;top:314px;width:1px;height:2px;background:#8c8c86"></i>
<i style="left:1px;top:320px;width:13px;height:2px;background:#4a3a40"></i>
<i style="left:1px;top:323px;width:6px;height:2px;background:#8e2e4a"></i>
<i style="left:8px;top:323px;width:8px;height:2px;background:#587c88"></i>
<i style="left:17px;top:323px;width:14px;height:2px;background:#74843e"></i>
<i style="left:41px;top:323px;width:4px;height:2px;background:#8c8c86"></i>
<i style="left:4px;top:326px;width:6px;height:2px;background:#8e2e4a"></i>
<i style="left:11px;top:326px;width:9px;height:2px;background:#8c8c86"></i>
<i style="left:21px;top:326px;width:37px;height:2px;background:#8a8660"></i>
<i style="left:60px;top:326px;width:6px;height:2px;background:#8c8c86"></i>
<i style="left:1px;top:329px;width:1px;height:2px;background:#8c8c86"></i>
<i style="left:1px;top:335px;width:15px;height:2px;background:#4a3a40"></i>
<i style="left:1px;top:338px;width:6px;height:2px;background:#8e2e4a"></i>
<i style="left:8px;top:338px;width:8px;height:2px;background:#587c88"></i>
<i style="left:17px;top:338px;width:14px;height:2px;background:#74843e"></i>
<i style="left:41px;top:338px;width:4px;height:2px;background:#8c8c86"></i>
<i style="left:4px;top:341px;width:6px;height:2px;background:#8e2e4a"></i>
<i style="left:11px;top:341px;width:8px;height:2px;background:#8c8c86"></i>
<i style="left:21px;top:341px;width:35px;height:2px;background:#8a8660"></i>
<i style="left:58px;top:341px;width:8px;height:2px;background:#8c8c86"></i>
<i style="left:1px;top:344px;width:1px;height:2px;background:#8c8c86"></i>
<i style="left:1px;top:350px;width:14px;height:2px;background:#4a3a40"></i>
<i style="left:1px;top:353px;width:6px;height:2px;background:#8e2e4a"></i>
<i style="left:8px;top:353px;width:8px;height:2px;background:#587c88"></i>
<i style="left:17px;top:353px;width:20px;height:2px;background:#74843e"></i>
<i style="left:41px;top:353px;width:4px;height:2px;background:#8c8c86"></i>
<i style="left:4px;top:356px;width:6px;height:2px;background:#8e2e4a"></i>
<i style="left:11px;top:356px;width:9px;height:2px;background:#8c8c86"></i>
<i style="left:21px;top:356px;width:28px;height:2px;background:#8a8660"></i>
<i style="left:51px;top:356px;width:11px;height:2px;background:#8c8c86"></i>
<i style="left:1px;top:359px;width:1px;height:2px;background:#8c8c86"></i>
<i style="left:1px;top:365px;width:16px;height:2px;background:#4a3a40"></i>
<i style="left:1px;top:368px;width:6px;height:2px;background:#8e2e4a"></i>
<i style="left:8px;top:368px;width:8px;height:2px;background:#587c88"></i>
<i style="left:17px;top:368px;width:18px;height:2px;background:#74843e"></i>
<i style="left:41px;top:368px;width:4px;height:2px;background:#8c8c86"></i>
<i style="left:4px;top:371px;width:6px;height:2px;background:#8e2e4a"></i>
<i style="left:11px;top:371px;width:8px;height:2px;background:#8c8c86"></i>
<i style="left:21px;top:371px;width:39px;height:2px;background:#8a8660"></i>
<i style="left:1px;top:374px;width:1px;height:2px;background:#8c8c86"></i>
<i style="left:1px;top:380px;width:12px;height:2px;background:#4a3a40"></i>
<i style="left:1px;top:383px;width:6px;height:2px;background:#8e2e4a"></i>
<i style="left:8px;top:383px;width:8px;height:2px;background:#587c88"></i>
<i style="left:17px;top:383px;width:20px;height:2px;background:#74843e"></i>
<i style="left:41px;top:383px;width:4px;height:2px;background:#8c8c86"></i>
<i style="left:4px;top:386px;width:6px;height:2px;background:#8e2e4a"></i>
<i style="left:11px;top:386px;width:9px;height:2px;background:#8c8c86"></i>
<i style="left:21px;top:386px;width:38px;height:2px;background:#8a8660"></i>
<i style="left:1px;top:389px;width:1px;height:2px;background:#8c8c86"></i>
<i style="left:1px;top:395px;width:10px;height:2px;background:#4a3a40"></i>
<i style="left:1px;top:398px;width:6px;height:2px;background:#8e2e4a"></i>
<i style="left:8px;top:398px;width:8px;height:2px;background:#587c88"></i>
<i style="left:17px;top:398px;width:15px;height:2px;background:#74843e"></i>
<i style="left:41px;top:398px;width:4px;height:2px;background:#8c8c86"></i>
<i style="left:4px;top:401px;width:6px;height:2px;background:#8e2e4a"></i>
<i style="left:11px;top:401px;width:8px;height:2px;background:#8c8c86"></i>
<i style="left:21px;top:401px;width:30px;height:2px;background:#8a8660"></i>
<i style="left:53px;top:401px;width:8px;height:2px;background:#8c8c86"></i>
<i style="left:1px;top:404px;width:1px;height:2px;background:#8c8c86"></i>
<i style="left:1px;top:410px;width:8px;height:2px;background:#4a3a40"></i>
<i style="left:1px;top:413px;width:6px;height:2px;background:#8e2e4a"></i>
<i style="left:8px;top:413px;width:8px;height:2px;background:#587c88"></i>
<i style="left:17px;top:413px;width:21px;height:2px;background:#74843e"></i>
<i style="left:41px;top:413px;width:4px;height:2px;background:#8c8c86"></i>
<i style="left:4px;top:416px;width:6px;height:2px;background:#8e2e4a"></i>
<i style="left:11px;top:416px;width:10px;height:2px;background:#8c8c86"></i>
<i style="left:21px;top:416px;width:31px;height:2px;background:#8a8660"></i>
<i style="left:54px;top:416px;width:5px;height:2px;background:#8c8c86"></i>
<i style="left:1px;top:419px;width:1px;height:2px;background:#8c8c86"></i>
<i style="left:1px;top:425px;width:10px;height:2px;background:#4a3a40"></i>
<i style="left:1px;top:428px;width:6px;height:2px;background:#8e2e4a"></i>
<i style="left:8px;top:428px;width:8px;height:2px;background:#587c88"></i>
<i style="left:17px;top:428px;width:20px;height:2px;background:#74843e"></i>
<i style="left:41px;top:428px;width:4px;height:2px;background:#8c8c86"></i>
<i style="left:4px;top:431px;width:6px;height:2px;background:#8e2e4a"></i>
<i style="left:11px;top:431px;width:10px;height:2px;background:#8c8c86"></i>
<i style="left:21px;top:431px;width:37px;height:2px;background:#8a8660"></i>
<i style="left:60px;top:431px;width:10px;height:2px;background:#8c8c86"></i>
<i style="left:1px;top:434px;width:1px;height:2px;background:#8c8c86"></i>
<i style="left:1px;top:440px;width:10px;height:2px;background:#4a3a40"></i>
<i style="left:1px;top:443px;width:6px;height:2px;background:#8e2e4a"></i>
<i style="left:8px;top:443px;width:8px;height:2px;background:#587c88"></i>
<i style="left:17px;top:443px;width:22px;height:2px;background:#74843e"></i>
<i style="left:41px;top:443px;width:4px;height:2px;background:#8c8c86"></i>
<i style="left:4px;top:446px;width:6px;height:2px;background:#8e2e4a"></i>
<i style="left:11px;top:446px;width:10px;height:2px;background:#8c8c86"></i>
<i style="left:21px;top:446px;width:27px;height:2px;background:#8a8660"></i>
<i style="left:50px;top:446px;width:11px;height:2px;background:#8c8c86"></i>
<i style="left:1px;top:449px;width:1px;height:2px;background:#8c8c86"></i>
<i style="left:1px;top:455px;width:14px;height:2px;background:#4a3a40"></i>
<i style="left:1px;top:458px;width:6px;height:2px;background:#8e2e4a"></i>
<i style="left:8px;top:458px;width:8px;height:2px;background:#587c88"></i>
<i style="left:17px;top:458px;width:20px;height:2px;background:#74843e"></i>
<i style="left:41px;top:458px;width:4px;height:2px;background:#8c8c86"></i>
<i style="left:4px;top:461px;width:6px;height:2px;background:#8e2e4a"></i>
<i style="left:11px;top:461px;width:9px;height:2px;background:#8c8c86"></i>
<i style="left:21px;top:461px;width:29px;height:2px;background:#8a8660"></i>
<i style="left:52px;top:461px;width:11px;height:2px;background:#8c8c86"></i>
<i style="left:1px;top:464px;width:1px;height:2px;background:#8c8c86"></i>
<i style="left:1px;top:470px;width:8px;height:2px;background:#4a3a40"></i>
<i style="left:1px;top:473px;width:6px;height:2px;background:#8e2e4a"></i>
<i style="left:8px;top:473px;width:8px;height:2px;background:#587c88"></i>
<i style="left:17px;top:473px;width:17px;height:2px;background:#74843e"></i>
<i style="left:41px;top:473px;width:4px;height:2px;background:#8c8c86"></i>
<i style="left:4px;top:476px;width:6px;height:2px;background:#8e2e4a"></i>
<i style="left:11px;top:476px;width:8px;height:2px;background:#8c8c86"></i>
<i style="left:21px;top:476px;width:32px;height:2px;background:#8a8660"></i>
<i style="left:55px;top:476px;width:6px;height:2px;background:#8c8c86"></i>
<i style="left:1px;top:479px;width:1px;height:2px;background:#8c8c86"></i>
<i style="left:1px;top:485px;width:13px;height:2px;background:#4a3a40"></i>
<i style="left:1px;top:488px;width:6px;height:2px;background:#8e2e4a"></i>
<i style="left:8px;top:488px;width:8px;height:2px;background:#587c88"></i>
<i style="left:17px;top:488px;width:14px;height:2px;background:#74843e"></i>
<i style="left:41px;top:488px;width:4px;height:2px;background:#8c8c86"></i>
<i style="left:4px;top:491px;width:6px;height:2px;background:#8e2e4a"></i>
<i style="left:11px;top:491px;width:8px;height:2px;background:#8c8c86"></i>
<i style="left:21px;top:491px;width:26px;height:2px;background:#8a8660"></i>
<i style="left:49px;top:491px;width:6px;height:2px;background:#8c8c86"></i>
<i style="left:1px;top:494px;width:1px;height:2px;background:#8c8c86"></i>
<i style="left:1px;top:500px;width:13px;height:2px;background:#4a3a40"></i>
<i style="left:1px;top:503px;width:6px;height:2px;background:#8e2e4a"></i>
<i style="left:8px;top:503px;width:8px;height:2px;background:#587c88"></i>
<i style="left:17px;top:503px;width:14px;height:2px;background:#74843e"></i>
<i style="left:41px;top:503px;width:4px;height:2px;background:#8c8c86"></i>
<i style="left:4px;top:506px;width:6px;height:2px;background:#8e2e4a"></i>
<i style="left:11px;top:506px;width:8px;height:2px;background:#8c8c86"></i>
<i style="left:21px;top:506px;width:32px;height:2px;background:#8a8660"></i>
<i style="left:55px;top:506px;width:7px;height:2px;background:#8c8c86"></i>
<i style="left:1px;top:509px;width:1px;height:2px;background:#8c8c86"></i>
<i style="left:1px;top:515px;width:12px;height:2px;background:#4a3a40"></i>
<i style="left:1px;top:518px;width:6px;height:2px;background:#8e2e4a"></i>
<i style="left:8px;top:518px;width:8px;height:2px;background:#587c88"></i>
<i style="left:17px;top:518px;width:19px;height:2px;background:#74843e"></i>
<i style="left:41px;top:518px;width:4px;height:2px;background:#8c8c86"></i>
<i style="left:4px;top:521px;width:6px;height:2px;background:#8e2e4a"></i>
<i style="left:11px;top:521px;width:10px;height:2px;background:#8c8c86"></i>
<i style="left:21px;top:521px;width:37px;height:2px;background:#8a8660"></i>
<i style="left:60px;top:521px;width:6px;height:2px;background:#8c8c86"></i>
<i style="left:1px;top:524px;width:1px;height:2px;background:#8c8c86"></i>
<i style="left:1px;top:530px;width:15px;height:2px;background:#4a3a40"></i>
<i style="left:1px;top:533px;width:6px;height:2px;background:#8e2e4a"></i>
<i style="left:8px;top:533px;width:8px;height:2px;background:#587c88"></i>
<i style="left:17px;top:533px;width:21px;height:2px;background:#74843e"></i>
<i style="left:41px;top:533px;width:4px;height:2px;background:#8c8c86"></i>
<i style="left:4px;top:536px;width:6px;height:2px;background:#8e2e4a"></i>
<i style="left:11px;top:536px;width:9px;height:2px;background:#8c8c86"></i>
<i style="left:21px;top:536px;width:41px;height:2px;background:#8a8660"></i>
<i style="left:64px;top:536px;width:7px;height:2px;background:#8c8c86"></i>
<i style="left:1px;top:539px;width:1px;height:2px;background:#8c8c86"></i>
<i style="left:1px;top:545px;width:9px;height:2px;background:#4a3a40"></i>
<i style="left:1px;top:548px;width:6px;height:2px;background:#8e2e4a"></i>
<i style="left:8px;top:548px;width:8px;height:2px;background:#587c88"></i>
<i style="left:17px;top:548px;width:19px;height:2px;background:#74843e"></i>
<i style="left:41px;top:548px;width:4px;height:2px;background:#8c8c86"></i>
<i style="left:4px;top:551px;width:6px;height:2px;background:#8e2e4a"></i>
<i style="left:11px;top:551px;width:10px;height:2px;background:#8c8c86"></i>
<i style="left:21px;top:551px;width:34px;height:2px;background:#8a8660"></i>
<i style="left:57px;top:551px;width:7px;height:2px;background:#8c8c86"></i>
<i style="left:1px;top:554px;width:1px;height:2px;background:#8c8c86"></i>
<i style="left:1px;top:560px;width:16px;height:2px;background:#4a3a40"></i>
<i style="left:1px;top:563px;width:6px;height:2px;background:#8e2e4a"></i>
<i style="left:8px;top:563px;width:8px;height:2px;background:#587c88"></i>
<i style="left:17px;top:563px;width:14px;height:2px;background:#74843e"></i>
<i style="left:41px;top:563px;width:4px;height:2px;background:#8c8c86"></i>
<i style="left:4px;top:566px;width:6px;height:2px;background:#8e2e4a"></i>
<i style="left:11px;top:566px;width:8px;height:2px;background:#8c8c86"></i>
<i style="left:21px;top:566px;width:42px;height:2px;background:#8a8660"></i>
<i style="left:65px;top:566px;width:5px;height:2px;background:#8c8c86"></i>
<i style="left:1px;top:569px;width:1px;height:2px;background:#8c8c86"></i>
<i style="left:1px;top:575px;width:16px;height:2px;background:#4a3a40"></i>
<i style="left:1px;top:578px;width:6px;height:2px;background:#8e2e4a"></i>
<i style="left:8px;top:578px;width:8px;height:2px;background:#587c88"></i>
<i style="left:17px;top:578px;width:18px;height:2px;background:#74843e"></i>
<i style="left:41px;top:578px;width:4px;height:2px;background:#8c8c86"></i>
<i style="left:4px;top:581px;width:6px;height:2px;background:#8e2e4a"></i>
<i style="left:11px;top:581px;width:10px;height:2px;background:#8c8c86"></i>
<i style="left:21px;top:581px;width:28px;height:2px;background:#8a8660"></i>
<i style="left:51px;top:581px;width:9px;height:2px;background:#8c8c86"></i>
<i style="left:1px;top:584px;width:1px;height:2px;background:#8c8c86"></i>
<i style="left:1px;top:590px;width:16px;height:2px;background:#4a3a40"></i>
<i style="left:1px;top:593px;width:6px;height:2px;background:#8e2e4a"></i>
<i style="left:8px;top:593px;width:8px;height:2px;background:#587c88"></i>
<i style="left:17px;top:593px;width:19px;height:2px;background:#74843e"></i>
<i style="left:41px;top:593px;width:4px;height:2px;background:#8c8c86"></i>
<i style="left:4px;top:596px;width:6px;height:2px;background:#8e2e4a"></i>
<i style="left:11px;top:596px;width:8px;height:2px;background:#8c8c86"></i>
<i style="left:21px;top:596px;width:37px;height:2px;background:#8a8660"></i>
<i style="left:1px;top:599px;width:1px;height:2px;background:#8c8c86"></i>
<i style="left:1px;top:605px;width:16px;height:2px;background:#4a3a40"></i>
<i style="left:1px;top:608px;width:6px;height:2px;background:#8e2e4a"></i>
<i style="left:8px;top:608px;width:8px;height:2px;background:#587c88"></i>
<i style="left:17px;top:608px;width:22px;height:2px;background:#74843e"></i>
<i style="left:41px;top:608px;width:4px;height:2px;background:#8c8c86"></i>
<i style="left:4px;top:611px;width:6px;height:2px;background:#8e2e4a"></i>
<i style="left:11px;top:611px;width:10px;height:2px;background:#8c8c86"></i>
<i style="left:21px;top:611px;width:36px;height:2px;background:#8a8660"></i>
<i style="left:59px;top:611px;width:8px;height:2px;background:#8c8c86"></i>
<i style="left:1px;top:614px;width:1px;height:2px;background:#8c8c86"></i>
<i style="left:1px;top:620px;width:11px;height:2px;background:#4a3a40"></i>
<i style="left:1px;top:623px;width:6px;height:2px;background:#8e2e4a"></i>
<i style="left:8px;top:623px;width:8px;height:2px;background:#587c88"></i>
<i style="left:17px;top:623px;width:20px;height:2px;background:#74843e"></i>
<i style="left:41px;top:623px;width:4px;height:2px;background:#8c8c86"></i>
<i style="left:4px;top:626px;width:6px;height:2px;background:#8e2e4a"></i>
<i style="left:11px;top:626px;width:10px;height:2px;background:#8c8c86"></i>
<i style="left:21px;top:626px;width:33px;height:2px;background:#8a8660"></i>
<i style="left:56px;top:626px;width:12px;height:2px;background:#8c8c86"></i>
<i style="left:1px;top:629px;width:1px;height:2px;background:#8c8c86"></i>
<i style="left:1px;top:635px;width:13px;height:2px;background:#4a3a40"></i>
<i style="left:1px;top:638px;width:6px;height:2px;background:#8e2e4a"></i>
<i style="left:8px;top:638px;width:8px;height:2px;background:#587c88"></i>
<i style="left:17px;top:638px;width:14px;height:2px;background:#74843e"></i>
<i style="left:41px;top:638px;width:4px;height:2px;background:#8c8c86"></i>
<i style="left:4px;top:641px;width:6px;height:2px;background:#8e2e4a"></i>
<i style="left:11px;top:641px;width:8px;height:2px;background:#8c8c86"></i>
<i style="left:21px;top:641px;width:34px;height:2px;background:#8a8660"></i>
<i style="left:57px;top:641px;width:8px;height:2px;background:#8c8c86"></i>
<i style="left:1px;top:644px;width:1px;height:2px;background:#8c8c86"></i>
<i style="left:1px;top:650px;width:13px;height:2px;background:#4a3a40"></i>
<i style="left:1px;top:653px;width:6px;height:2px;background:#8e2e4a"></i>
<i style="left:8px;top:653px;width:8px;height:2px;background:#587c88"></i>
<i style="left:17px;top:653px;width:21px;height:2px;background:#74843e"></i>
<i style="left:41px;top:653px;width:4px;height:2px;background:#8c8c86"></i>
<i style="left:4px;top:656px;width:6px;height:2px;background:#8e2e4a"></i>
<i style="left:11px;top:656px;width:10px;height:2px;background:#8c8c86"></i>
<i style="left:21px;top:656px;width:37px;height:2px;background:#8a8660"></i>
<i style="left:1px;top:659px;width:1px;height:2px;background:#8c8c86"></i>
<i style="left:1px;top:665px;width:13px;height:2px;background:#4a3a40"></i>
<i style="left:1px;top:668px;width:6px;height:2px;background:#8e2e4a"></i>
<i style="left:8px;top:668px;width:8px;height:2px;background:#587c88"></i>
<i style="left:17px;top:668px;width:15px;height:2px;background:#74843e"></i>
<i style="left:41px;top:668px;width:4px;height:2px;background:#8c8c86"></i>
<i style="left:4px;top:671px;width:6px;height:2px;background:#8e2e4a"></i>
<i style="left:11px;top:671px;width:8px;height:2px;background:#8c8c86"></i>
<i style="left:21px;top:671px;width:29px;height:2px;background:#8a8660"></i>
<i style="left:52px;top:671px;width:8px;height:2px;background:#8c8c86"></i>
<i style="left:1px;top:674px;width:1px;height:2px;background:#8c8c86"></i>
<i style="left:1px;top:680px;width:13px;height:2px;background:#4a3a40"></i>
<i style="left:1px;top:683px;width:6px;height:2px;background:#8e2e4a"></i>
<i style="left:8px;top:683px;width:8px;height:2px;background:#587c88"></i>
<i style="left:17px;top:683px;width:17px;height:2px;background:#74843e"></i>
<i style="left:41px;top:683px;width:4px;height:2px;background:#8c8c86"></i>
<i style="left:4px;top:686px;width:6px;height:2px;background:#8e2e4a"></i>
<i style="left:11px;top:686px;width:9px;height:2px;background:#8c8c86"></i>
<i style="left:21px;top:686px;width:26px;height:2px;background:#8a8660"></i>
<i style="left:49px;top:686px;width:10px;height:2px;background:#8c8c86"></i>
<i style="left:1px;top:689px;width:1px;height:2px;background:#8c8c86"></i>
<i style="left:1px;top:695px;width:9px;height:2px;background:#4a3a40"></i>
<i style="left:1px;top:698px;width:6px;height:2px;background:#8e2e4a"></i>
<i style="left:8px;top:698px;width:8px;height:2px;background:#587c88"></i>
<i style="left:17px;top:698px;width:15px;height:2px;background:#74843e"></i>
<i style="left:41px;top:698px;width:4px;height:2px;background:#8c8c86"></i>
<i style="left:4px;top:701px;width:6px;height:2px;background:#8e2e4a"></i>
<i style="left:11px;top:701px;width:9px;height:2px;background:#8c8c86"></i>
<i style="left:21px;top:701px;width:32px;height:2px;background:#8a8660"></i>
<i style="left:55px;top:701px;width:7px;height:2px;background:#8c8c86"></i>
<i style="left:1px;top:704px;width:1px;height:2px;background:#8c8c86"></i>
</div>
<div class="a" style="left:1043px;top:92px;width:1px;height:0px"></div>
<div class="a" style="left:1126px;top:96px;width:7px;height:49px;background:#7a7a78"></div>
<div id="console" class="a"></div>
<div class="a" style="left:31px;top:747px;width:335px;height:1px;background:#1a1a18"></div>
<div class="a" style="left:30px;top:747px;width:1px;height:30px;background:#1a1a18"></div>
<div class="a" style="left:0;top:776px;width:366px;height:1px;background:#1c1c1a"></div><div class="a" style="left:0;top:780px;width:1135px;height:2px;background:#1c1c1a"></div>
<svg class="a" style="left:7px;top:752px" width="17" height="15" viewBox="0 0 17 15"><path d="M0 0H6L8 2.5H17V15H0Z" fill="#d0d0cc"/><path d="M4 8H14M4 11.5H14" stroke="#2a2a28" stroke-width="1.8"/></svg>
<svg class="a" style="left:40px;top:755px" width="16" height="13" viewBox="0 0 16 13" fill="none" stroke="#8c8c88" stroke-width="1.3"><circle cx="4" cy="9" r="3"/><circle cx="12" cy="9" r="3"/><path d="M1 9L3 3H6V7M15 9L13 3H10V7M6 5H10"/></svg>
<svg class="a" style="left:72px;top:754px" width="15" height="15" viewBox="0 0 15 15" fill="none" stroke="#8c8c88" stroke-width="1.3"><ellipse cx="7.5" cy="9" rx="4" ry="5"/><path d="M4.5 4A3 3 0 0 1 10.5 4M7.5 4V14M1 6L3.5 7M14 6L11.5 7M1 10H3.5M14 10H11.5M1 14L3.5 12.5M14 14L11.5 12.5"/></svg>
<svg class="a" style="left:104px;top:754px" width="16" height="15" viewBox="0 0 16 15" fill="none" stroke="#8c8c88" stroke-width="1.3"><path d="M12 4A6 6 0 1 0 12 11"/><path d="M6 10L9 7.5L6 5M9 7.5H15M13 5.5L15 7.5L13 9.5"/></svg>
<svg class="a" style="left:136px;top:754px" width="16" height="15" viewBox="0 0 16 15" fill="none" stroke="#8c8c88" stroke-width="1.3"><circle cx="6.5" cy="6.5" r="5.5"/><path d="M1 6.5H12M6.5 1V12"/><path d="M8 14H15A2.5 2.5 0 0 0 13 10A3 3 0 0 0 8 11Z" fill="#282824"/></svg>
<span class="t" style="left:23px;top:807px;font-size:14px;color:#e8e8e8">uniapp - Web</span>
<div class="a" style="left:18px;top:827px;width:114px;height:2px;background:#c8c8c4"></div>
<svg class="a" style="left:954px;top:806px" width="15" height="15" viewBox="0 0 15 15" fill="none" stroke="#d0d0cc" stroke-width="1.2"><ellipse cx="7.5" cy="8.5" rx="4" ry="5"/><path d="M4.5 4A3 3 0 0 1 10.5 4M7.5 4V13.5M1 6.5L3.5 7.5M14 6.5L11.5 7.5M1 11L3.5 10.5M14 11L11.5 10.5"/></svg>
<svg class="a" style="left:985px;top:807px" width="14" height="14" viewBox="0 0 14 14" fill="none" stroke="#d0d0cc" stroke-width="1.2"><path d="M4 1.8A5.6 5.6 0 1 0 7 1.4"/><path d="M5.5 4.5L9.5 7L5.5 9.5Z" fill="#d0d0cc"/></svg>
<div class="a" style="left:1016px;top:808px;width:12px;height:12px;border:1.3px solid #d0d0cc"></div><div class="a" style="left:1019px;top:811px;width:6px;height:6px;background:#c8c8c4"></div>
<svg class="a" style="left:1045px;top:806px" width="15" height="15" viewBox="0 0 15 15" fill="none" stroke="#d0d0cc" stroke-width="1.2"><path d="M9 1.5H1V14H14V6"/><path d="M3.5 6.5L6 8.5L3.5 10.5M7.5 11H10M12 1V5.5M9.8 3.2H14.2"/></svg>
<svg class="a" style="left:1075px;top:808px" width="14" height="9" viewBox="0 0 14 9" fill="none" stroke="#d0d0cc" stroke-width="1.2" stroke-width="1.4"><path d="M1 8L7 2L13 8"/></svg>
<svg class="a" style="left:1104px;top:807px" width="17" height="14" viewBox="0 0 17 14" fill="none" stroke="#d0d0cc" stroke-width="1.2" stroke-width="1.3"><path d="M1 2L8 12M8 2L1 12M13 1V12M10 9L13 12L16 9"/></svg>
<div class="cl" style="left:32px;top:847px"><span style="color:#9c9c98">13:55:59.892</span> {app_agreement: , center_setting: , index_setting: , navigation_menu: , navigation_setting: , <span class="lk">...</span>} <span class="lk">at pages</span></div>
<div class="cl" style="left:32px;top:867px"><span class="lk">/register/register.vue:185</span></div>
<div class="cl" style="left:32px;top:887px"><span style="color:#9c9c98">13:56:33.343</span> App Hide <span class="lk">at App.vue:30</span></div>
<div class="cl" style="left:32px;top:907px"><span style="color:#9c9c98">13:56:33.472</span> [HMR] Waiting for update signal from WDS...</div>
<div class="cl" style="left:32px;top:927px"><span style="color:#9c9c98">13:56:34.251</span> {app_agreement: , center_setting: , index_setting: , navigation_menu: , navigation_setting: , <span class="lk">...</span>} <span class="lk">at pages</span></div>
<div class="cl" style="left:32px;top:947px"><span class="lk">/index/index.vue:381</span></div>
<div class="a" style="left:9px;top:959px;width:431px;height:24px;background:#000"></div>
<div class="a" style="left:1123px;top:781px;width:11px;height:201px;background:#1e1e1c"></div>
<div id="browser" class="a"></div>
<div class="a" style="left:1133px;top:57px;width:386px;height:33px;background:#1c1c1a"></div>
<div class="a" style="left:1133px;top:57px;width:1px;height:925px;background:#181816"></div>
<div class="a" style="left:1134px;top:60px;width:113px;height:30px;background:#262624"></div>
<span class="t" style="left:1145px;top:68px;font-size:13px;color:#d8d8d4">Web浏览器</span>
<svg class="a" style="left:1221px;top:70px" width="10" height="10" viewBox="0 0 10 10"><path d="M1 1L9 9M9 1L1 9" stroke="#d0d0cc" stroke-width="1.2"/></svg>
<div class="a" style="left:1134px;top:90px;width:384px;height:70px;background:#262624"></div>
<div class="a" style="left:1140px;top:95px;width:366px;height:27px;border:1px solid #6c6c68;background:#262624"></div>
<span class="t" style="left:1149px;top:102px;font-size:13.6px;color:#dcdcd8">http://localhost:8080/mobile/bundle/pages/bargain/bargain</span>
<div class="a" style="left:1141px;top:127px;width:118px;height:26px;background:#1f1f1d;border:1px solid #2c2c2a"></div>
<span class="t" style="left:1146px;top:134px;font-size:12px;color:#c8c8c4">PC模式</span>
<svg class="a" style="left:1247px;top:138px" width="8" height="5" viewBox="0 0 8 5"><path d="M0 0H8L4 5Z" fill="#d0d0cc"/></svg>
<svg class="a" style="left:1272px;top:134px" width="14" height="13" viewBox="0 0 14 13" fill="none" stroke="#e0e0dc" stroke-width="1.3"><path d="M5.5 0.7H13.3V12.3H0.7V5.5"/><path d="M0.9 0.9L7 7M0.9 0.9H5M0.9 0.9V5"/></svg>
<svg class="a" style="left:1301px;top:133px" width="15" height="15" viewBox="0 0 15 15" fill="none" stroke="#e0e0dc" stroke-width="1.3"><path d="M6.2 1H8.8L9.3 2.8L11 3.8L12.8 3.2L14 5.5L12.7 6.8V8.2L14 9.5L12.8 11.8L11 11.2L9.3 12.2L8.8 14H6.2L5.7 12.2L4 11.2L2.2 11.8L1 9.5L2.3 8.2V6.8L1 5.5L2.2 3.2L4 3.8L5.7 2.8Z"/><circle cx="7.5" cy="7.5" r="2"/></svg>
<svg class="a" style="left:1331px;top:134px" width="15" height="13" viewBox="0 0 15 13" fill="none" stroke="#e0e0dc" stroke-width="1.3"><rect x="0.7" y="0.7" width="13.6" height="11.6"/><path d="M3 3.5L5.5 5.5L3 7.5M6.5 9H9.5"/></svg>
<svg class="a" style="left:1362px;top:134px" width="14" height="13" viewBox="0 0 14 13" fill="none" stroke="#e0e0dc" stroke-width="1.3" stroke-width="1.6"><path d="M13 6.5H1.5M6.5 1.5L1.5 6.5L6.5 11.5"/></svg>
<svg class="a" style="left:1391px;top:134px" width="14" height="13" viewBox="0 0 14 13" fill="none" stroke="#e0e0dc" stroke-width="1.3" stroke-width="1.6"><path d="M1 6.5H12.5M7.5 1.5L12.5 6.5L7.5 11.5"/></svg>
<svg class="a" style="left:1422px;top:133px" width="14" height="14" viewBox="0 0 14 14" fill="none" stroke="#e0e0dc" stroke-width="1.3"><path d="M12 4.5A5.7 5.7 0 1 0 12.6 8"/><path d="M12.8 1V5H8.8" /></svg>
<svg class="a" style="left:1453px;top:133px" width="11" height="14" viewBox="0 0 11 14" fill="none" stroke="#e0e0dc" stroke-width="1.3"><rect x="0.7" y="6.5" width="9.6" height="6.8"/><path d="M2.5 6.5V4A3 3 0 0 1 8.5 3"/></svg>
<svg class="a" style="left:1482px;top:133px" width="13" height="13" viewBox="0 0 13 13" fill="none" stroke="#e0e0dc" stroke-width="1.3"><rect x="0.7" y="0.7" width="4.3" height="4.3"/><rect x="8" y="0.7" width="4.3" height="4.3"/><rect x="0.7" y="8" width="4.3" height="4.3"/><path d="M8 8H10M12 8V10.5M8 10.5V12.3H12.3"/></svg>
<div class="a" style="left:1134px;top:160px;width:384px;height:823px;background:#f02468"></div>
<div class="a" style="left:1518px;top:0px;width:1px;height:1007px;background:#8a94a0"></div>
<div class="a" style="left:1134px;top:160px;width:384px;height:45px;background:#fff"></div>
<div class="a" style="left:1147px;top:166px;width:83px;height:33px;border:1px solid #e6e6e6;border-radius:17px;background:#fff"></div>
<svg class="a" style="left:1162px;top:174px" width="10" height="16" viewBox="0 0 10 16"><path d="M8.5 1.5L2 8L8.5 14.5" fill="none" stroke="#111" stroke-width="1.8"/></svg>
<div class="a" style="left:1188px;top:174px;width:1px;height:16px;background:#ddd"></div>
<svg class="a" style="left:1202px;top:175px" width="16" height="14" viewBox="0 0 16 14"><path d="M0 1.5H16M0 7H16M0 12.5H16" stroke="#111" stroke-width="1.8"/></svg>
<span class="t" style="left:1294px;top:174px;font-size:16px;font-weight:bold;color:#111">砍价活动</span>
<div class="a" style="left:1134px;top:205px;width:384px;height:150px;overflow:hidden;background:linear-gradient(90deg,#e8207a 0%,#d4207e 20%,#f02868 50%,#f03a60 80%,#f53a6a 100%)">
<div class="a" style="left:20px;top:-40px;width:110px;height:110px;border-radius:50%;background:radial-gradient(circle,#7a2a98 0%,#9a2a90 40%,rgba(200,40,130,0) 70%)"></div>
<div class="a" style="left:295px;top:-105px;width:190px;height:132px;border-radius:50%;border-bottom:19px solid #f5703e;filter:blur(1px)"></div>
<div class="a" style="left:-10px;top:70px;width:400px;height:90px;background:radial-gradient(ellipse at 50% 100%,#e030a0 0%,rgba(224,48,160,0) 70%)"></div>
<div class="a" style="left:66px;top:-45px;width:254px;height:254px;border-radius:50%;background:linear-gradient(180deg,#f8b0b8 0%,#f8a8a8 35%,#f57a4a 55%,#f5683a 100%)"></div>
<div class="a" style="left:69px;top:-42px;width:248px;height:246px;border-radius:50%;background:linear-gradient(180deg,#ee2a44 0%,#f0345a 40%,#f2507a 62%,#e82650 74%,#ee2a72 86%,#f02a8c 100%)"></div>
<div class="a" style="left:66px;top:-45px;width:254px;height:254px;border-radius:50%;border:7px solid #f5683a;-webkit-mask-image:linear-gradient(180deg,transparent 40%,#000 62%);mask-image:linear-gradient(180deg,transparent 40%,#000 62%)"></div>
<div class="a" style="left:10px;top:45px;width:42px;height:55px;border-radius:50%;background:radial-gradient(circle at 40% 35%,#f88a6a,#e84a4a 60%,#d83050)"></div>
<div class="a" style="left:315px;top:85px;width:42px;height:45px;border-radius:50%;background:radial-gradient(circle at 40% 35%,#fdd070,#f5a040 60%,#f08040)"></div>
<div class="a" style="left:0px;top:95px;width:45px;height:40px;border-radius:50%;background:radial-gradient(circle,#fff 0%,#fde 35%,rgba(255,200,230,0) 70%)"></div>
<div class="a" style="left:355px;top:100px;width:40px;height:45px;border-radius:50%;background:radial-gradient(circle,#fff 0%,#fde 30%,rgba(255,200,230,0) 70%)"></div>
<div class="a" style="left:300px;top:55px;width:50px;height:45px;border-radius:50%;background:radial-gradient(circle,#f070d0 0%,rgba(240,112,208,0) 70%)"></div>
<div class="a" style="left:63px;top:70px;width:14px;height:15px;background:#e8102a;transform:rotate(-20deg)"></div>
<div class="a" style="left:72px;top:103px;width:24px;height:22px;background:#e8102a;transform:rotate(-25deg)"></div>
<div class="a" style="left:336px;top:60px;width:14px;height:13px;background:#e8102a;transform:rotate(-30deg)"></div>
<span class="t" style="left:97px;top:26px;font-size:30px;font-weight:bold;color:#fde8ee;letter-spacing:0.5px">全场精选好货</span>
<span class="t" style="left:127px;top:67px;font-size:30px;font-weight:bold;color:#fde8ee">低至1元砍</span>
<span class="t" style="left:121px;top:108px;font-size:13.3px;font-weight:bold;color:#fbd0dc">已有 58564 人砍价成功</span>
</div>
<div class="a" style="left:1146px;top:353px;width:360px;height:122px;background:#fff;border-radius:9px"></div>
<svg class="a" style="left:1158px;top:368px" width="92" height="92" viewBox="0 0 92 92">
<defs><linearGradient id="nib" x1="0" y1="0" x2="1" y2="0.3"><stop offset="0" stop-color="#c8b080"/><stop offset="0.3" stop-color="#e0d8c0"/><stop offset="0.5" stop-color="#a8a8a8"/><stop offset="0.75" stop-color="#d8d8d8"/><stop offset="1" stop-color="#909090"/></linearGradient></defs>
<rect x="0.5" y="0.5" width="91" height="91" rx="4" fill="#08080a" stroke="#e0143c" stroke-width="1.2"/>
<path d="M15 4L38 30L48 82L30 84L14 45L11 40Z" fill="url(#nib)"/>
<path d="M10 40L14 45L30 84L24 86L7 48Z" fill="#c8b078"/>
<circle cx="24" cy="36" r="1.5" fill="#222"/>
<path d="M67 1H88A3 3 0 0 1 91 4V14H67Z" fill="#e0143c"/>
<rect x="71" y="5" width="14" height="2" fill="#f8d0d8"/><rect x="70" y="9" width="17" height="2" fill="#f8d0d8"/>
<path d="M1 81H91V88A3 3 0 0 1 88 91H4A3 3 0 0 1 1 88Z" fill="#e0143c"/>
<rect x="36" y="84" width="30" height="3" fill="#f0c0c8"/><rect x="34" y="78" width="40" height="2" fill="#d0a0a0"/>
<rect x="69" y="78" width="8" height="12" fill="#d8d8e0"/>
<rect x="52" y="42" width="32" height="2" fill="#6a6a6a"/><rect x="60" y="49" width="14" height="1" fill="#555"/>
</svg>
<span class="t" style="left:1262px;top:375px;font-size:13.6px;color:#333">日本进口pilot百乐贵客钢笔 硬橡胶生</span>
<span class="t" style="left:1262px;top:395px;font-size:13.6px;color:#333">漆18k金笔fkv-88sr莳绘30号金尖限...</span>
<span class="t" style="left:1262px;top:419px;font-size:12px;color:#ee8a70">最低可砍至¥</span>
<span class="t" style="left:1330px;top:416px;font-size:17px;color:#ee8a70">100</span>
<span class="t" style="left:1262px;top:443px;font-size:12px;color:#9a9a9a">单买 ¥6860.00</span>
<div class="a" style="left:1406px;top:426px;width:88px;height:31px;border-radius:5px;background:linear-gradient(90deg,#f5603a,#ec3c3c)"></div>
<span class="t" style="left:1422px;top:434px;font-size:13px;font-weight:bold;color:#fff">发起砍价</span>
<span class="t" style="left:1270px;top:493px;font-size:14px;color:#f8e8ee;font-weight:bold">我可是有底线的～</span>
<div class="a" style="left:1142px;top:893px;width:380px;height:74px;border-radius:6px;background:#49373e"></div>
<svg class="a" style="left:1164px;top:918px" width="18" height="18" viewBox="0 0 18 18" stroke="#e0e0e0" stroke-width="2" stroke-linecap="round"><path d="M9 1.5V4M9 14V16.5M1.5 9H4M14 9H16.5M3.7 3.7L5.5 5.5M12.5 12.5L14.3 14.3M3.7 14.3L5.5 12.5M12.5 5.5L14.3 3.7" /></svg>
<span class="t" style="left:1189px;top:920px;font-size:13.5px;color:#ececec">正在下载第(26/28)个插件...</span>
<svg class="a" style="left:1496px;top:922px" width="14" height="8" viewBox="0 0 14 8"><path d="M1 1L7 7L13 1" fill="none" stroke="#d8d8d8" stroke-width="1.3"/></svg>
<div id="status" class="a"></div>
<div class="a" style="left:0;top:1003px;width:1519px;height:4px;background:#8d8d8d"></div>
<svg class="a" style="left:29px;top:986px" width="15" height="15" viewBox="0 0 15 15"><circle cx="7.5" cy="7.5" r="6.8" fill="none" stroke="#cfcfcf" stroke-width="1.2"/><circle cx="7.5" cy="5.8" r="2.4" fill="#cfcfcf"/><path d="M3.3 12.3A4.5 4.5 0 0 1 11.7 12.3Z" fill="#cfcfcf"/></svg>
<span class="t sb" style="left:50px;top:988px">1735031199@qq.com</span>
<svg class="a" style="left:234px;top:987px" width="14" height="13" viewBox="0 0 14 13" fill="none" stroke="#d0d0d0" stroke-width="1.2"><path d="M5 1.5H13M5 6.5H13M5 11.5H13M1 1.5H3M1 6.5H3M1 11.5H3"/></svg>
<svg class="a" style="left:259px;top:986px" width="15" height="14" viewBox="0 0 15 14" fill="none" stroke="#d0d0d0" stroke-width="1.2"><rect x="0.6" y="0.6" width="13.8" height="12.8"/><path d="M3 4L6 6.5L3 9M7.5 10H11"/></svg>
<span class="t sb" style="left:1104px;top:988px">语法提示库</span>
<span class="t sb" style="left:1190px;top:988px">行:21</span>
<span class="t sb" style="left:1229px;top:988px">列:28</span>
<span class="t sb" style="left:1284px;top:988px">UTF-8</span>
<span class="t sb" style="left:1344px;top:988px">JavaScript</span>
<svg class="a" style="left:1420px;top:986px" width="17" height="16" viewBox="0 0 17 16"><path d="M8.5 1A7 6.3 0 1 0 12 12.8L15.5 15L14.3 11.5A7 6.3 0 0 0 8.5 1Z" fill="#e8e8e8"/><path d="M6 4.5V9.5H11V4.5" fill="none" stroke="#555" stroke-width="1.6"/></svg>
<svg class="a" style="left:1449px;top:985px" width="18" height="17" viewBox="0 0 18 17"><circle cx="7.5" cy="9" r="7" fill="#e8e8e8"/><path d="M7.5 5V12M5 9.5L7.5 12L10 9.5" fill="none" stroke="#555" stroke-width="1.3"/><circle cx="14" cy="4" r="3" fill="#e9553a"/></svg>
<svg class="a" style="left:1480px;top:985px" width="15" height="16" viewBox="0 0 15 16"><path d="M7.5 1A4.5 4.5 0 0 0 3 5.5V10L1 13H14L12 10V5.5A4.5 4.5 0 0 0 7.5 1Z" fill="#2fa84f"/><circle cx="7.5" cy="14" r="1.6" fill="#2fa84f"/></svg>
<div class="a" style="left:0;top:0;width:1519px;height:1007px;overflow:hidden">
<div class="wm" style="left:-143.4px;top:18.4px">vip.9fym.com</div>
<div class="wm" style="left:-1.9px;top:-122.5px">vip.9fym.com</div>
<div class="wm" style="left:-121.1px;top:604.9px">vip.9fym.com</div>
<div class="wm" style="left:20.4px;top:464.0px">vip.9fym.com</div>
<div class="wm" style="left:161.9px;top:323.1px">vip.9fym.com</div>
<div class="wm" style="left:303.4px;top:182.2px">vip.9fym.com</div>
<div class="wm" style="left:444.9px;top:41.3px">vip.9fym.com</div>
<div class="wm" style="left:586.4px;top:-99.6px">vip.9fym.com</div>
<div class="wm" style="left:184.2px;top:909.6px">vip.9fym.com</div>
<div class="wm" style="left:325.7px;top:768.7px">vip.9fym.com</div>
<div class="wm" style="left:467.2px;top:627.8px">vip.9fym.com</div>
<div class="wm" style="left:608.7px;top:486.9px">vip.9fym.com</div>
<div class="wm" style="left:750.2px;top:346.0px">vip.9fym.com</div>
<div class="wm" style="left:891.7px;top:205.1px">vip.9fym.com</div>
<div class="wm" style="left:1033.2px;top:64.2px">vip.9fym.com</div>
<div class="wm" style="left:1174.7px;top:-76.7px">vip.9fym.com</div>
<div class="wm" style="left:772.5px;top:932.5px">vip.9fym.com</div>
<div class="wm" style="left:914.0px;top:791.6px">vip.9fym.com</div>
<div class="wm" style="left:1055.5px;top:650.7px">vip.9fym.com</div>
<div class="wm" style="left:1197.0px;top:509.8px">vip.9fym.com</div>
<div class="wm" style="left:1338.5px;top:368.9px">vip.9fym.com</div>
<div class="wm" style="left:1480.0px;top:228.0px">vip.9fym.com</div>
<div class="wm" style="left:1360.8px;top:955.4px">vip.9fym.com</div>
<div class="wm" style="left:1502.3px;top:814.5px">vip.9fym.com</div>
</div>
<span class="t" style="left:1491px;top:-2px;font-size:12.5px;color:#b8b8b8;letter-spacing:0px">正版</span>
<div class="a" style="left:0;top:0;width:1519px;height:1px;background:#9ca2ae"></div>
<div class="a" style="left:0;top:0;width:1px;height:1007px;background:#8a9098"></div>
</body></html>
